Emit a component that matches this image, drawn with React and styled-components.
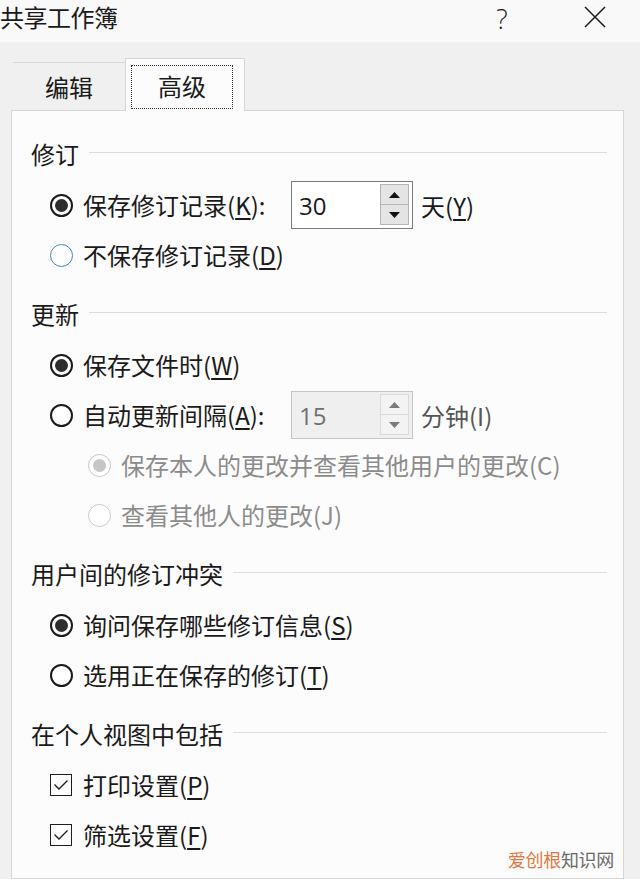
import React from 'react';
import styled, { createGlobalStyle } from 'styled-components';

const GlobalStyle = createGlobalStyle`
  html, body { margin: 0; padding: 0; }
  body {
    background: #f0f0f0;
    font-family: "Noto Sans CJK SC", "Noto Sans", sans-serif;
    color: #1a1a1a;
    overflow: hidden;
  }
`;

const Dialog = styled.div`
  position: relative;
  width: 640px;
  height: 879px;
  display: flex;
  flex-direction: column;
  overflow: hidden;
`;

const TitleBar = styled.div`
  height: 42px;
  flex-shrink: 0;
  background: #f9f9f9;
  display: flex;
  align-items: flex-start;
  padding-right: 25px;
`;

const Title = styled.div`
  flex: 1;
  font-size: 24px;
  line-height: 34px;
  letter-spacing: -0.5px;
`;

const TitleButton = styled.div`
  width: 40px;
  height: 42px;
  box-sizing: border-box;
  padding-bottom: 6px;
  display: flex;
  align-items: center;
  justify-content: center;
  font-family: "Open Sans", "Noto Sans", sans-serif;
  font-weight: 300;
  font-size: 27px;
  line-height: 1;
  color: #1a1a1a;
  & + & { margin-left: 53px; padding-bottom: 8px; }
`;

const TabStrip = styled.div`
  margin-top: 16px;
  height: 52px;
  padding-left: 13px;
  display: flex;
  align-items: flex-end;
  flex-shrink: 0;
  position: relative;
  z-index: 1;
`;

const Tab = styled.div`
  box-sizing: border-box;
  display: flex;
  align-items: center;
  justify-content: center;
  font-size: 24px;
  ${p => p.$active ? `
    width: 120px;
    height: 53px;
    margin-bottom: -1px;
    background: #fcfcfc;
    border: 1px solid #d6d6d6;
    border-bottom: none;
    padding: 6px 11px 2px 5px;
  ` : `
    width: 112px;
    height: 48px;
    border-top: 1px solid #d9d9d9;
  `}
`;

const FocusRect = styled.span`
  flex: 1;
  align-self: stretch;
  display: flex;
  align-items: center;
  justify-content: center;
  border: 1px dotted #333;
  padding-bottom: 4px;
`;

const Panel = styled.div`
  flex: 1;
  margin-left: 11px;
  width: 613px;
  box-sizing: border-box;
  background: #fcfcfc;
  border: 1px solid #d6d6d6;
  padding: 26px 16px 0 19px;
`;

const Section = styled.section`
  & + & { margin-top: 17px; }
`;

const Header = styled.div`
  height: 32px;
  display: flex;
  align-items: center;
  font-size: 24px;
  margin-bottom: 11px;
  &::after {
    content: '';
    flex: 1;
    height: 1px;
    background: #dcdcdc;
    margin-left: 10px;
    margin-top: -2px;
  }
`;

const Options = styled.div`
  padding-left: ${p => p.$indent || 19}px;
`;

const Row = styled.div`
  height: 50px;
  display: flex;
  align-items: center;
  font-size: 24px;
  color: ${p => p.$disabled ? '#8c8c8c' : '#1a1a1a'};
  padding-left: ${p => p.$sub ? 38 : 0}px;
`;

const RadioCircle = styled.span`
  width: 23px;
  height: 23px;
  box-sizing: border-box;
  border-radius: 50%;
  flex-shrink: 0;
  margin-right: 10px;
  background: #fff;
  display: flex;
  align-items: center;
  justify-content: center;
  border: ${p => p.$disabled ? '1.5px solid #c8c8c8' : p.$focus ? '1.5px solid #3f88b5' : '2px solid #1a1a1a'};
  &::after {
    content: '';
    display: ${p => p.$checked ? 'block' : 'none'};
    width: 13px;
    height: 13px;
    border-radius: 50%;
    background: ${p => p.$disabled ? '#c6c6c6' : '#2d2d2d'};
  }
`;

const CheckBox = styled.span`
  width: 22px;
  height: 22px;
  box-sizing: border-box;
  border: 1.5px solid #1f1f1f;
  background: #fff;
  flex-shrink: 0;
  margin-right: 11px;
  display: flex;
  align-items: center;
  justify-content: center;
`;

const Label = styled.span`
  white-space: nowrap;
  line-height: 1;
  ${p => p.$width ? `width: ${p.$width}px;` : ''}
`;

const Key = styled.span`
  text-decoration: underline;
  text-underline-offset: 3px;
  text-decoration-thickness: 1.5px;
`;

const SpinBox = styled.div`
  width: 122px;
  height: 48px;
  box-sizing: border-box;
  display: flex;
  border: 1px solid ${p => p.$disabled ? '#c4c4c4' : '#7a7a7a'};
  background: ${p => p.$disabled ? '#efefef' : '#fff'};
`;

const SpinValue = styled.div`
  flex: 1;
  display: flex;
  align-items: center;
  padding-left: 7px;
  font-family: "Open Sans", "Noto Sans", sans-serif;
  font-size: 24px;
  color: ${p => p.$disabled ? '#6e6e6e' : '#1a1a1a'};
`;

const SpinButtons = styled.div`
  width: 29px;
  margin: 2px 3px 3px 0;
  display: flex;
  flex-direction: column;
`;

const SpinButton = styled.div`
  flex: 1;
  box-sizing: border-box;
  display: flex;
  align-items: center;
  justify-content: center;
  background: ${p => p.$disabled ? '#f3f3f3' : '#e4e4e4'};
  border: 1px solid ${p => p.$disabled ? '#dadada' : '#b4b4b4'};
  & + & { margin-top: -1px; }
`;

const Unit = styled.span`
  margin-left: 8px;
  white-space: nowrap;
  color: ${p => p.$muted ? '#555' : '#1a1a1a'};
`;

const Watermark = styled.div`
  position: absolute;
  right: 26px;
  bottom: 7px;
  font-size: 18px;
  color: #6a6a6a;
  letter-spacing: -0.3px;
`;

const Orange = styled.span`
  color: #e2783f;
`;

const Arrow = ({ up, color }) => (
  <svg width="11" height="6" viewBox="0 0 11 6">
    {up ? <polygon points="0,6 11,6 5.5,0" fill={color} /> : <polygon points="0,0 11,0 5.5,6" fill={color} />}
  </svg>
);

const Spinner = ({ value, disabled }) => {
  const c = disabled ? '#7a7a7a' : '#111';
  return (
    <SpinBox $disabled={disabled}>
      <SpinValue $disabled={disabled}>{value}</SpinValue>
      <SpinButtons>
        <SpinButton $disabled={disabled}><Arrow up color={c} /></SpinButton>
        <SpinButton $disabled={disabled}><Arrow color={c} /></SpinButton>
      </SpinButtons>
    </SpinBox>
  );
};

const Radio = ({ checked, disabled, focus, sub, children }) => (
  <Row $disabled={disabled} $sub={sub}>
    <RadioCircle $checked={checked} $disabled={disabled} $focus={focus} />
    {children}
  </Row>
);

const Check = ({ children }) => (
  <Row>
    <CheckBox>
      <svg width="16" height="12" viewBox="0 0 16 12">
        <polyline points="1.5,5.5 6,10 14.5,1.5" fill="none" stroke="#1f1f1f" strokeWidth="1.4" />
      </svg>
    </CheckBox>
    <Label>{children}</Label>
  </Row>
);

export default function App() {
  return (
    <>
      <GlobalStyle />
      <Dialog>
        <TitleBar>
          <Title>共享工作簿</Title>
          <TitleButton>?</TitleButton>
          <TitleButton>
            <svg width="22" height="22" viewBox="0 0 22 22">
              <path d="M1 1 L21 21 M21 1 L1 21" stroke="#1a1a1a" strokeWidth="1.5" />
            </svg>
          </TitleButton>
        </TitleBar>

        <TabStrip>
          <Tab>编辑</Tab>
          <Tab $active><FocusRect>高级</FocusRect></Tab>
        </TabStrip>

        <Panel>
          <Section>
            <Header>修订</Header>
            <Options>
              <Radio checked>
                <Label $width={208}>保存修订记录(<Key>K</Key>):</Label>
                <Spinner value="30" />
                <Unit>天(<Key>Y</Key>)</Unit>
              </Radio>
              <Radio focus>
                <Label>不保存修订记录(<Key>D</Key>)</Label>
              </Radio>
            </Options>
          </Section>

          <Section>
            <Header>更新</Header>
            <Options>
              <Radio checked>
                <Label>保存文件时(<Key>W</Key>)</Label>
              </Radio>
              <Radio>
                <Label $width={208}>自动更新间隔(<Key>A</Key>):</Label>
                <Spinner value="15" disabled />
                <Unit $muted>分钟(I)</Unit>
              </Radio>
              <Radio sub checked disabled>
                <Label>保存本人的更改并查看其他用户的更改(C)</Label>
              </Radio>
              <Radio sub disabled>
                <Label>查看其他人的更改(J)</Label>
              </Radio>
            </Options>
          </Section>

          <Section>
            <Header>用户间的修订冲突</Header>
            <Options>
              <Radio checked>
                <Label>询问保存哪些修订信息(<Key>S</Key>)</Label>
              </Radio>
              <Radio>
                <Label>选用正在保存的修订(<Key>T</Key>)</Label>
              </Radio>
            </Options>
          </Section>

          <Section>
            <Header>在个人视图中包括</Header>
            <Options>
              <Check>打印设置(<Key>P</Key>)</Check>
              <Check>筛选设置(<Key>F</Key>)</Check>
            </Options>
          </Section>
        </Panel>

        <Watermark><Orange>爱创根</Orange>知识网</Watermark>
      </Dialog>
    </>
  );
}
